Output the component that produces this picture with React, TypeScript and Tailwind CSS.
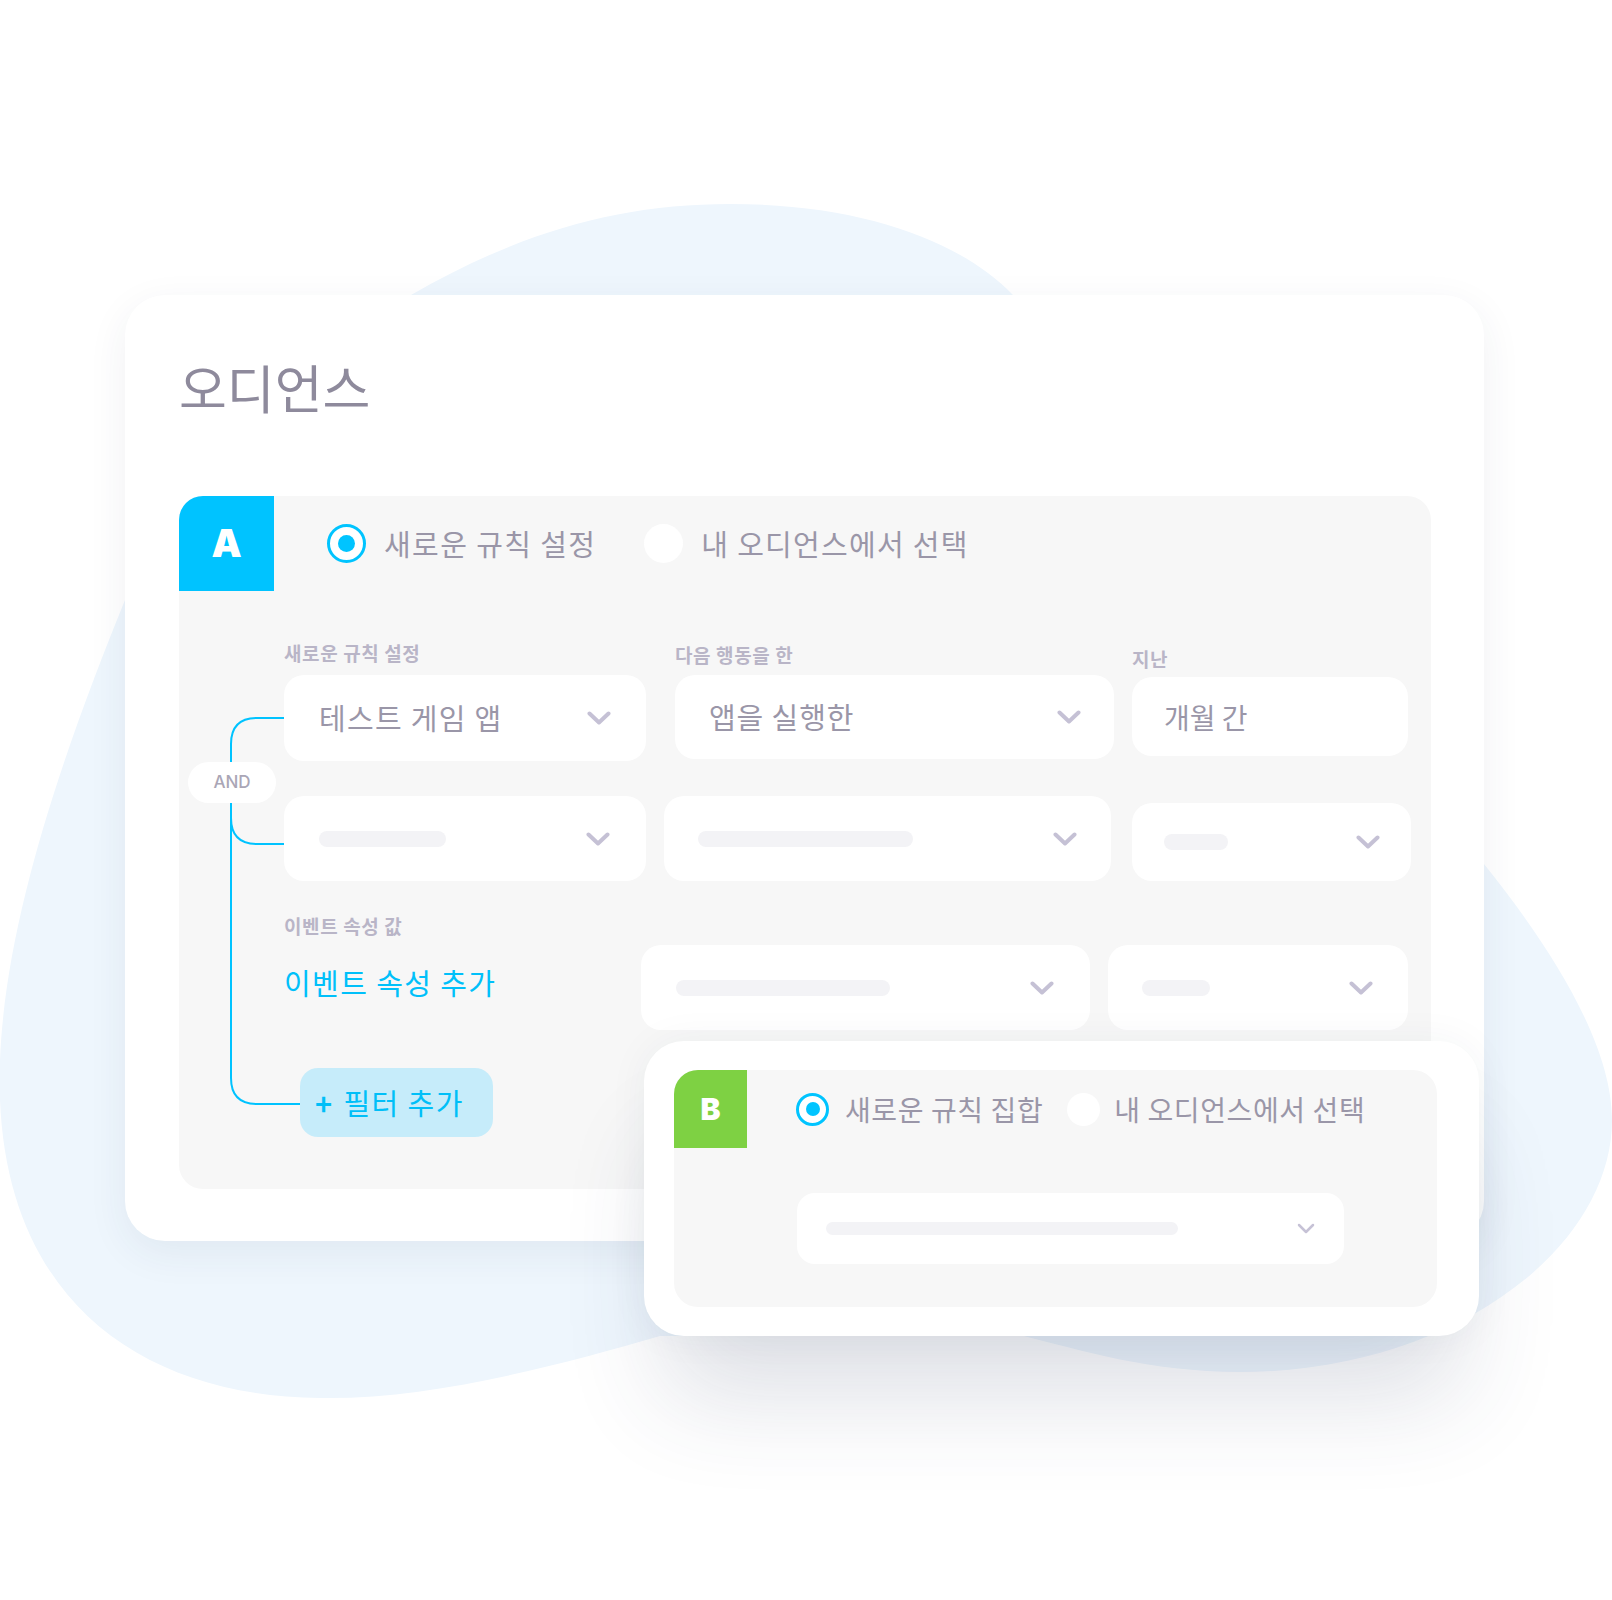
import React from 'react';

const Chevron = ({ small }: { small?: boolean }) =>
  small ? (
    <svg width="18" height="11" viewBox="0 0 18 11">
      <path d="M2 2l7 7 7-7" fill="none" stroke="#c6c2d6" strokeWidth="2.5" strokeLinecap="round" strokeLinejoin="round" />
    </svg>
  ) : (
    <svg width="24" height="14" viewBox="0 0 24 14">
      <path d="M2.5 2.5l9.5 9 9.5-9" fill="none" stroke="#c5c1d5" strokeWidth="4" strokeLinecap="round" strokeLinejoin="round" />
    </svg>
  );

const Label = ({ children }: { children: React.ReactNode }) => (
  <div className="text-[19px] leading-[22px] tracking-[0.6px] font-bold text-[#b9b5c7]">{children}</div>
);

const Bar = ({ w }: { w: string }) => <div className={`${w} h-[16px] rounded-full bg-[#f3f3f6]`} />;

const Radio = ({ on, size = 'lg' }: { on?: boolean; size?: 'lg' | 'sm' }) => {
  const box = size === 'lg' ? 'w-[39px] h-[39px]' : 'w-[33px] h-[33px]';
  if (!on) return <div className={`${box} shrink-0 rounded-full bg-white`} />;
  return (
    <div className={`${box} shrink-0 rounded-full bg-white border-[3px] border-[#00c4ff] flex items-center justify-center`}>
      <div className={`${size === 'lg' ? 'w-[17px] h-[17px]' : 'w-[14px] h-[14px]'} rounded-full bg-[#00c4ff]`} />
    </div>
  );
};

export default function App() {
  return (
    <div className="relative w-[1612px] h-[1600px] overflow-hidden bg-white font-['Noto_Sans_CJK_KR',sans-serif]">
      {/* background blob */}
      <svg className="absolute inset-0" width="1612" height="1600" viewBox="0 0 1612 1600">
        <path
          d="M411 295 C520 232 620 204 730 204 C860 204 960 240 1013 295 L1484 864 C1545 940 1612 1040 1612 1120 C1612 1250 1450 1372 1240 1372 C1150 1372 1080 1350 1020 1335 L660 1336 C560 1365 430 1400 320 1398 C140 1396 8 1300 0 1100 C-6 950 60 760 125 600 Z"
          fill="#eef6fd"
        />
      </svg>

      <div className="relative pl-[125px] pt-[295px]">
        <div className="w-[1359px] h-[946px] rounded-[40px] bg-white pl-[54px] pt-[66px] shadow-[0_12px_40px_rgba(40,50,80,0.07)]">
          <h1 className="text-[52px] leading-[52px] tracking-[0px] font-normal text-[#8e8a9c]">오디언스</h1>

          {/* rule A */}
          <div className="relative mt-[83px] w-[1252px] h-[693px] rounded-[24px] bg-[#f7f7f7]">
            <svg className="absolute left-0 top-0" width="200" height="700" viewBox="0 0 200 700">
              <path d="M105 222 H78 Q52 222 52 248 V322 Q52 348 78 348 H105" fill="none" stroke="#00c3ff" strokeWidth="2" />
              <path d="M52 300 V582 Q52 608 78 608 H121" fill="none" stroke="#00c3ff" strokeWidth="2" />
            </svg>
            <div className="absolute left-[9px] top-[266px] w-[88px] h-[41px] rounded-full bg-white flex items-center justify-center font-['Inter',sans-serif] text-[17px] font-medium text-[#aaa6b6]">
              AND
            </div>

            <div className="flex items-center h-[95px]">
              <div className="w-[95px] h-[95px] rounded-tl-[24px] bg-[#00c3ff] flex items-center justify-center font-['Inter',sans-serif] text-[38px] font-black text-white">
                A
              </div>
              <div className="ml-[53px]"><Radio on /></div>
              <span className="ml-[18px] text-[29px] tracking-[1.4px] text-[#9a96a8]">새로운 규칙 설정</span>
              <div className="ml-[48px]"><Radio /></div>
              <span className="ml-[18px] text-[29px] tracking-[1.3px] text-[#9a96a8]">내 오디언스에서 선택</span>
            </div>

            <div className="relative pl-[105px]">
              <div className="mt-[51px] flex items-start">
                <div className="flex flex-col">
                  <Label>새로운 규칙 설정</Label>
                  <div className="mt-[11px] w-[362px] h-[86px] rounded-[20px] bg-white flex items-center justify-between pl-[35px] pr-[35px]">
                    <span className="text-[29px] tracking-[1.3px] text-[#9a96a8]">테스트 게임 앱</span>
                    <Chevron />
                  </div>
                </div>
                <div className="ml-[29px] mt-[2px] flex flex-col">
                  <Label>다음 행동을 한</Label>
                  <div className="mt-[9px] w-[439px] h-[84px] rounded-[20px] bg-white flex items-center justify-between pl-[34px] pr-[33px]">
                    <span className="text-[29px] tracking-[0.9px] text-[#9a96a8]">앱을 실행한</span>
                    <Chevron />
                  </div>
                </div>
                <div className="ml-[18px] mt-[6px] flex flex-col">
                  <Label>지난</Label>
                  <div className="mt-[7px] w-[276px] h-[79px] rounded-[20px] bg-white flex items-center pl-[32px]">
                    <span className="text-[28px] text-[#9a96a8]">개월 간</span>
                  </div>
                </div>
              </div>

              <div className="mt-[35px] flex items-start">
                <div className="w-[362px] h-[85px] rounded-[20px] bg-white flex items-center justify-between pl-[35px] pr-[36px]">
                  <Bar w="w-[127px]" />
                  <Chevron />
                </div>
                <div className="ml-[18px] w-[447px] h-[85px] rounded-[20px] bg-white flex items-center justify-between pl-[34px] pr-[34px]">
                  <Bar w="w-[215px]" />
                  <Chevron />
                </div>
                <div className="ml-[21px] mt-[7px] w-[279px] h-[78px] rounded-[20px] bg-white flex items-center justify-between pl-[32px] pr-[31px]">
                  <Bar w="w-[64px]" />
                  <Chevron />
                </div>
              </div>

              <div className="mt-[34px] flex items-start">
                <div className="w-[357px] flex flex-col">
                  <Label>이벤트 속성 값</Label>
                  <span className="mt-[28px] text-[29px] leading-[34px] tracking-[1.4px] text-[#00c0fa]">이벤트 속성 추가</span>
                </div>
                <div className="mt-[30px] w-[449px] h-[85px] rounded-[20px] bg-white flex items-center justify-between pl-[35px] pr-[36px]">
                  <Bar w="w-[214px]" />
                  <Chevron />
                </div>
                <div className="ml-[18px] mt-[30px] w-[300px] h-[85px] rounded-[20px] bg-white flex items-center justify-between pl-[34px] pr-[35px]">
                  <Bar w="w-[68px]" />
                  <Chevron />
                </div>
              </div>

              <button className="mt-[38px] ml-[16px] w-[193px] h-[69px] rounded-[18px] bg-[#c6ecfa] flex items-center pl-[15px] text-[29px] tracking-[1.4px] text-[#00bff8]">
                <span className="font-bold">+</span>
                <span className="ml-[10px]">필터 추가</span>
              </button>
            </div>
          </div>
        </div>
      </div>

      {/* rule B, laid over the lower right of the audience card */}
      <div className="absolute left-[644px] top-[1041px] w-[835px] h-[295px] rounded-[40px] bg-white pl-[30px] pt-[29px] shadow-[0_80px_100px_-20px_rgba(50,60,100,0.16),0_0_40px_rgba(40,50,80,0.05)]">
        <div className="w-[763px] h-[237px] rounded-[24px] bg-[#f7f7f7]">
          <div className="flex items-center h-[78px]">
            <div className="w-[73px] h-[78px] rounded-tl-[24px] bg-[#7ed143] flex items-center justify-center font-['Inter',sans-serif] text-[30px] font-black text-white">
              B
            </div>
            <div className="ml-[49px]"><Radio on size="sm" /></div>
            <span className="ml-[16px] text-[28px] tracking-[0.6px] text-[#9a96a8]">새로운 규칙 집합</span>
            <div className="ml-[24px]"><Radio size="sm" /></div>
            <span className="ml-[14px] text-[28px] tracking-[0.6px] text-[#9a96a8]">내 오디언스에서 선택</span>
          </div>
          <div className="ml-[123px] mt-[45px] w-[547px] h-[71px] rounded-[18px] bg-white flex items-center justify-between pl-[29px] pr-[29px]">
            <div className="w-[352px] h-[13px] rounded-full bg-[#f3f3f6]" />
            <Chevron small />
          </div>
        </div>
      </div>
    </div>
  );
}
